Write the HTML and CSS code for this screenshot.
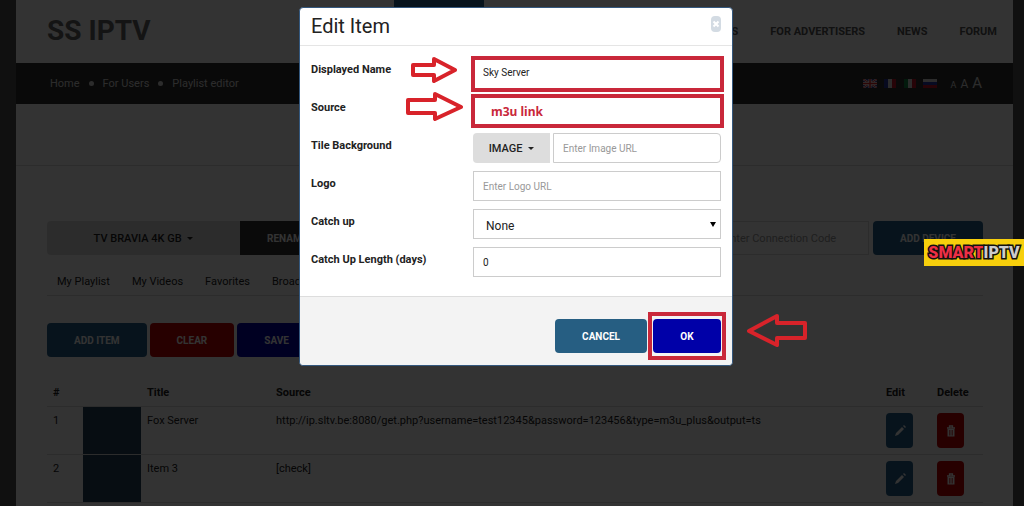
FILE: index.html
```html
<!DOCTYPE html>
<html lang="en">
<head>
  <meta charset="UTF-8" />
  <meta name="viewport" content="width=device-width, initial-scale=1.0"/>
  <title>SS IPTV - Playlist editor</title>
  <link rel="stylesheet" href="styles.css">
</head>
<body>
  <div class="page">
    <header class="header">
      <a class="brand" href="#">SS IPTV</a>
      <nav class="main-nav">
        <a class="active" href="#">For Users</a>
        <a href="#">For Manufacturers</a>
        <a href="#">For Developers</a>
        <a href="#">For Advertisers</a>
        <a href="#">News</a>
        <a href="#">Forum</a>
      </nav>
    </header>

    <!-- Breadcrumbs -->
    <div class="top-bar">
      <nav class="breadcrumbs">
        <a href="#">Home</a>
        <span class="dot"></span>
        <a href="#">For Users</a>
        <span class="dot"></span>
        <a href="#">Playlist editor</a>
      </nav>
      <div class="tools">
        <a href="#" aria-label="English">
          <svg width="14" height="9" viewBox="0 0 14 9"><rect width="14" height="9" fill="#3a3a8c"/><path d="M0 0L14 9M14 0L0 9" stroke="#fff" stroke-width="2"/><path d="M0 0L14 9M14 0L0 9" stroke="#d33" stroke-width="1"/><path d="M7 0V9M0 4.500H14" stroke="#fff" stroke-width="3"/><path d="M7 0V9M0 4.500H14" stroke="#d22" stroke-width="1.500"/></svg>
        </a>
        <a href="#" aria-label="French">
          <svg width="14" height="9" viewBox="0 0 14 9"><rect x="1" width="4" height="9" fill="#23349c"/><rect x="5" width="4" height="9" fill="#ddd"/><rect x="9" width="4" height="9" fill="#c4182c"/></svg>
        </a>
        <a href="#" aria-label="Italian">
          <svg width="14" height="9" viewBox="0 0 14 9"><rect x="1" width="4" height="9" fill="#128240"/><rect x="5" width="4" height="9" fill="#ddd"/><rect x="9" width="4" height="9" fill="#c4182c"/></svg>
        </a>
        <a href="#" aria-label="Russian">
          <svg width="14" height="9" viewBox="0 0 14 9"><rect width="14" height="3" fill="#ddd"/><rect y="3" width="14" height="3" fill="#2438a8"/><rect y="6" width="14" height="3" fill="#c4182c"/></svg>
        </a>
        <div class="font-size">
          <a class="small" href="#">A</a>
          <a class="medium" href="#">A</a>
          <a class="large" href="#">A</a>
        </div>
      </div>
    </div>

    <div class="title-area"></div>

    <main class="content">
      <div class="device-row">
        <button class="device">TV BRAVIA 4K GB <span class="caret"></span></button>
        <button class="btn dark">Rename</button>
        <input class="code" type="text" placeholder="Enter Connection Code" aria-label="Connection code">
        <button class="btn blue add-device">Add device</button>
      </div>

      <nav class="tabs">
        <a href="#">My Playlist</a>
        <a href="#">My Videos</a>
        <a href="#">Favorites</a>
        <a href="#">Broadcasts</a>
      </nav>

      <div class="actions">
        <button class="btn blue">Add item</button>
        <button class="btn red">Clear</button>
        <button class="btn navy">Save</button>
      </div>

      <table class="items">
        <thead>
          <tr>
            <th class="col-num">#</th>
            <th class="col-tile"></th>
            <th class="col-title">Title</th>
            <th>Source</th>
            <th class="col-edit">Edit</th>
            <th class="col-delete">Delete</th>
          </tr>
        </thead>
        <tbody>
          <tr>
            <td>1</td>
            <td class="tile"></td>
            <td>Fox Server</td>
            <td>http://ip.sltv.be:8080/get.php?username=test12345&amp;password=123456&amp;type=m3u_plus&amp;output=ts</td>
            <td><button class="icon-btn blue" aria-label="Edit"><svg width="12" height="12" viewBox="0 0 12 12"><path d="M1 11L2 8L8 2L10 4L4 10ZM9 1L10 0L12 2L11 3Z" fill="#fff"/></svg></button></td>
            <td><button class="icon-btn red" aria-label="Delete"><svg width="10" height="12" viewBox="0 0 10 12"><path d="M1 3H9M3.500 2.500V1H6.500V2.500" fill="none" stroke="#fff" stroke-width="1.300"/><path d="M1.500 4H8.500V11.500H1.500Z" fill="#fff"/><path d="M3.500 5V10.500M5 5V10.500M6.500 5V10.500" stroke="#c00000" stroke-width=".6"/></svg></button></td>
          </tr>
          <tr>
            <td>2</td>
            <td class="tile"></td>
            <td>Item 3</td>
            <td>[check]</td>
            <td><button class="icon-btn blue" aria-label="Edit"><svg width="12" height="12" viewBox="0 0 12 12"><path d="M1 11L2 8L8 2L10 4L4 10ZM9 1L10 0L12 2L11 3Z" fill="#fff"/></svg></button></td>
            <td><button class="icon-btn red" aria-label="Delete"><svg width="10" height="12" viewBox="0 0 10 12"><path d="M1 3H9M3.500 2.500V1H6.500V2.500" fill="none" stroke="#fff" stroke-width="1.300"/><path d="M1.500 4H8.500V11.500H1.500Z" fill="#fff"/><path d="M3.500 5V10.500M5 5V10.500M6.500 5V10.500" stroke="#c00000" stroke-width=".6"/></svg></button></td>
          </tr>
        </tbody>
      </table>
    </main>
  </div>

  <!-- Edit dialog -->
  <div class="backdrop">
    <form class="modal" role="dialog" aria-labelledby="modalTitle">
      <div class="modal-header">
        <h3 id="modalTitle">Edit Item</h3>
        <button type="button" class="close" aria-label="Close"><svg width="10" height="16" viewBox="0 0 10 16"><rect width="10" height="16" rx="4" fill="#d3dbe3"/><path d="M2.500 5.500L7.500 10.500M7.500 5.500L2.500 10.500" stroke="#fff" stroke-width="2"/></svg></button>
      </div>
      <div class="modal-body">
        <div class="field">
          <label for="name">Displayed Name</label>
          <input class="marked" type="text" id="name" value="Sky Server">
        </div>
        <div class="field">
          <label for="source">Source</label>
          <input class="marked link" type="text" id="source" value="m3u link">
        </div>
        <div class="field">
          <label for="image">Tile Background</label>
          <div class="group">
            <button type="button" class="device image-type">IMAGE <span class="caret"></span></button>
            <input type="text" id="image" placeholder="Enter Image URL">
          </div>
        </div>
        <div class="field">
          <label for="logo">Logo</label>
          <input type="text" id="logo" placeholder="Enter Logo URL">
        </div>
        <div class="field">
          <label for="catchup">Catch up</label>
          <div class="select-wrap">
            <select id="catchup">
              <option>None</option>
            </select>
          </div>
        </div>
        <div class="field">
          <label for="days">Catch Up Length (days)</label>
          <input type="text" id="days" value="0">
        </div>
      </div>
      <div class="modal-footer">
        <button type="button" class="btn cancel">Cancel</button>
        <button type="button" class="btn navy ok">OK</button>
      </div>

      <!-- Pointers to the important fields -->
      <svg class="arrow arrow-name" width="48" height="26" viewBox="0 0 48 26"><path d="M3 8H24V2L45 13L24 24V18H3Z"/></svg>
      <svg class="arrow arrow-source" width="58" height="30" viewBox="0 0 58 30"><path d="M2 9H29V3L55 16L29 28V22H2Z"/></svg>
      <svg class="arrow arrow-ok" width="62" height="34" viewBox="0 0 62 34"><path d="M59 9H31V2L3 17L31 31V24H59Z"/></svg>
    </form>
  </div>

  <div class="badge"><span class="smart">SMART</span><span class="iptv">IPTV</span></div>
</body>
</html>
```

FILE: styles.css
```css
* {
  box-sizing: border-box;
}
body {
  font-family: Roboto, "Liberation Sans", sans-serif;
  font-size: 11px;
  line-height: 16px;
  color: #222;
  background-color: #505050;
  margin: 0;
  height: 100vh;
  overflow: hidden;
}
a {
  color: inherit;
  text-decoration: none;
}
button, input, select {
  font-family: inherit;
  font-size: 11px;
  margin: 0;
}
.page {
  margin: 0 11px 0 16px;
  min-height: 100vh;
  background-color: #fff;
}
.header {
  display: flex;
  justify-content: space-between;
  height: 63px;
  padding-left: 31px;
}
.brand {
  font-size: 28px;
  line-height: 62px;
  font-weight: 700;
  color: #666;
  white-space: nowrap;
}
.main-nav {
  display: flex;
  font-weight: 700;
  line-height: 64px;
  text-transform: uppercase;
  white-space: nowrap;
  color: #555;
}
.main-nav a {
  padding: 0 16px;
}
.main-nav .active {
  background-color: #26608a;
  color: #fff;
}
.top-bar {
  display: flex;
  justify-content: space-between;
  align-items: center;
  height: 41px;
  padding: 0 31px 0 34px;
  background-color: #303030;
  color: #ddd;
}
.breadcrumbs {
  display: flex;
  align-items: center;
  gap: 9px;
}
.dot {
  width: 5px;
  height: 5px;
  border-radius: 50%;
  background-color: #ddd;
}
.tools {
  display: flex;
  align-items: center;
  gap: 6px;
}
.tools svg {
  display: block;
}
.font-size {
  display: flex;
  align-items: baseline;
  gap: 4px;
  margin-left: 8px;
}
.small {
  font-size: 9px;
}
.medium {
  font-size: 12px;
}
.large {
  font-size: 15px;
}
.title-area {
  height: 62px;
  border-bottom: 1px solid #ddd;
}
.content {
  padding: 55px 30px 0 31px;
}
.btn {
  height: 34px;
  padding: 0 27px;
  border: none;
  border-radius: 4px;
  font-size: 10px;
  font-weight: 700;
  text-transform: uppercase;
  white-space: nowrap;
  color: #fff;
}
.blue {
  background-color: #26608a;
}
.red {
  background-color: #c00000;
}
.navy {
  background-color: #0000a8;
}
.dark {
  background-color: #333;
  border-radius: 0;
}
.caret {
  display: inline-block;
  margin-left: 3px;
  border: 3px solid transparent;
  border-top-color: currentColor;
  border-bottom: none;
  vertical-align: middle;
}
.device {
  border: none;
  border-radius: 4px 0 0 4px;
  background-color: #ddd;
  font-weight: 500;
  color: #222;
}
.device-row {
  display: flex;
  height: 34px;
}
.device-row .device {
  width: 193px;
}
.code {
  width: 156px;
  margin: 0 4px 0 auto;
  padding: 0 10px;
  border: 1px solid #ddd;
  background-color: #fff;
}
.code::placeholder {
  color: #999;
}
.add-device {
  width: 110px;
}
.tabs {
  display: flex;
  gap: 22px;
  padding: 19px 10px 5px;
  border-bottom: 1px solid #ddd;
}
.actions {
  display: flex;
  gap: 3px;
  padding: 27px 0 21px;
}
.items {
  width: 100%;
  border-collapse: collapse;
  table-layout: fixed;
}
.items th, .items td {
  padding: 6px;
  text-align: left;
  vertical-align: top;
  border-bottom: 1px solid #ddd;
}
.items th {
  padding: 7px 6px 5px;
  font-weight: 700;
}
.items .col-num {
  width: 36px;
}
.items .col-tile {
  width: 58px;
}
.items .col-title {
  width: 129px;
}
.items .col-edit {
  width: 51px;
}
.items .col-delete {
  width: 52px;
}
.items .tile {
  background-color: #26405c;
}
.icon-btn {
  display: flex;
  align-items: center;
  justify-content: center;
  width: 27px;
  height: 35px;
  padding: 0;
  border: none;
  border-radius: 4px;
}

/* dialog */
.backdrop {
  position: fixed;
  inset: 0;
  padding: 7px 8px 0 16px;
  background-color: rgba(0, 0, 0, 0.8);
}
.modal {
  position: relative;
  width: 434px;
  max-width: 100%;
  margin: 0 auto;
  border: 1px solid #34587e;
  border-radius: 4px;
  background-color: #fff;
}
.modal-header {
  display: flex;
  justify-content: space-between;
  align-items: flex-start;
  padding: 6px 11px 7px;
  border-bottom: 1px solid #e5e5e5;
}
.modal-header h3 {
  margin: 0;
  font-size: 20px;
  line-height: 24px;
  font-weight: 400;
}
.close {
  display: flex;
  margin-top: 2px;
  padding: 0;
  border: none;
  background: none;
}
.modal-body {
  display: flex;
  flex-direction: column;
  gap: 8px;
  padding: 11px 11px 19px;
}
.field {
  display: flex;
}
.field label {
  width: 162px;
  padding-top: 5px;
  font-weight: 700;
}
.field input, .field select {
  flex: 1;
  min-width: 0;
  width: 100%;
  height: 30px;
  padding: 0 9px;
  border: 1px solid #ccc;
  border-radius: 0;
  font-size: 10px;
  color: #222;
  background-color: #fff;
}
.field input::placeholder {
  color: #999;
}
.field .marked {
  height: 36px;
  margin: -1px -3px -5px -2px;
  padding: 0 8px 3px;
  border: 4px solid #c9283a;
}
.field .link {
  height: 34px;
  margin-bottom: -3px;
  padding: 0 16px;
  font-family: "Noto Sans", sans-serif;
  font-size: 12px;
  font-weight: 700;
  color: #c9283a;
}
.group {
  display: flex;
  flex: 1;
  gap: 3px;
}
.image-type {
  width: 77px;
}
.group input {
  border-radius: 0 4px 4px 0;
}
.select-wrap {
  position: relative;
  flex: 1;
}
.field select {
  appearance: none;
  display: block;
  padding: 3px 12px 0;
  font-size: 12px;
}
.select-wrap::after {
  content: "";
  position: absolute;
  right: 5px;
  top: 13px;
  border: 3px solid transparent;
  border-top: 5px solid #000;
  border-bottom: none;
  pointer-events: none;
}
.modal-footer {
  display: flex;
  justify-content: flex-end;
  gap: 6px;
  padding: 22px 11px 12px;
  border-top: 1px solid #ddd;
  border-radius: 0 0 4px 4px;
  background-color: #f3f3f3;
}
.cancel {
  background-color: #265e82;
}
.ok {
  position: relative;
  min-width: 68px;
}
.ok::after {
  content: "";
  position: absolute;
  inset: -7px -5px;
  border: 4px solid #c9283a;
}
.arrow {
  position: absolute;
  fill: none;
  stroke: #d8232a;
  stroke-width: 4;
  stroke-linejoin: round;
}
.arrow-name {
  left: 110px;
  top: 49px;
}
.arrow-source {
  left: 106px;
  top: 83px;
}
.arrow-ok {
  left: 446px;
  top: 306px;
}
.badge {
  position: fixed;
  right: 0;
  top: 239px;
  width: 100px;
  height: 27px;
  text-align: center;
  white-space: nowrap;
  font-size: 16px;
  line-height: 27px;
  font-weight: 900;
  background-color: #f7cf0c;
  -webkit-text-stroke: 3px #111;
  paint-order: stroke fill;
}
.smart {
  color: #ee2f45;
}
.iptv {
  color: #ccc;
}
```
